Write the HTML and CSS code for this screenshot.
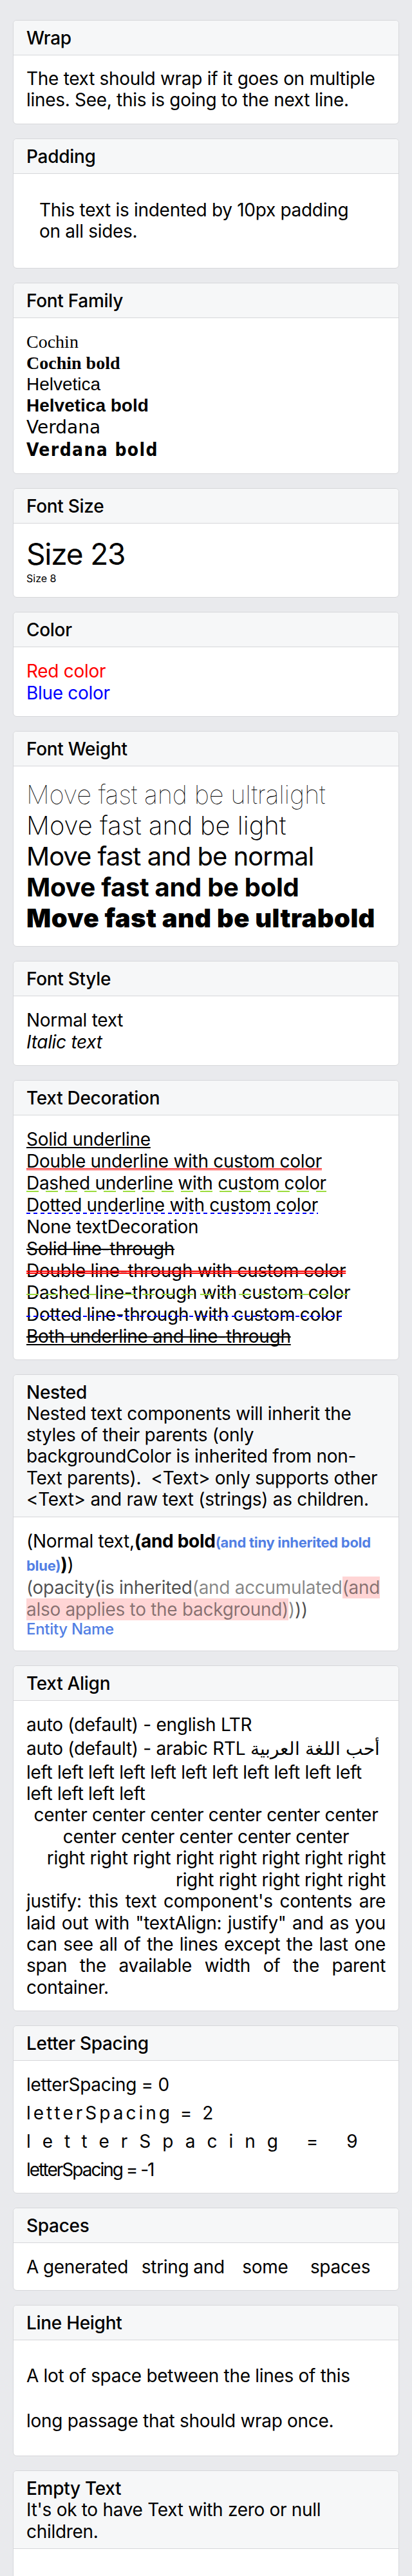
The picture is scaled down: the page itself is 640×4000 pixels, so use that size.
FILE: index.html
```html
<!DOCTYPE html>
<html lang="en">
<head>
    <meta charset="UTF-8">
    <meta name="viewport" content="width=device-width, initial-scale=1.0">
    <title>Text</title>
    <link rel="stylesheet" href="styles.css">
</head>
<body>
    <div class="page">
        <div class="block">
            <div class="block-head"><div class="block-title">Wrap</div></div>
            <div class="block-body">
                <p class="para">The text should wrap if it goes on multiple lines. See, this is going to the next line.</p>
            </div>
        </div>

        <div class="block">
            <div class="block-head"><div class="block-title">Padding</div></div>
            <div class="block-body">
                <p class="para padded">This text is indented by 10px padding on all sides.</p>
            </div>
        </div>

        <div class="block">
            <div class="block-head"><div class="block-title">Font Family</div></div>
            <div class="block-body">
                <div class="ff-cochin">Cochin</div>
                <div class="ff-cochin bold">Cochin bold</div>
                <div class="ff-helvetica">Helvetica</div>
                <div class="ff-helvetica bold">Helvetica bold</div>
                <div class="ff-verdana">Verdana</div>
                <div class="ff-verdana bold">Verdana bold</div>
            </div>
        </div>

        <div class="block">
            <div class="block-head"><div class="block-title">Font Size</div></div>
            <div class="block-body">
                <div class="size-23">Size 23</div>
                <div class="size-8">Size 8</div>
            </div>
        </div>

        <div class="block">
            <div class="block-head"><div class="block-title">Color</div></div>
            <div class="block-body">
                <div class="line red">Red color</div>
                <div class="line blue">Blue color</div>
            </div>
        </div>

        <div class="block">
            <div class="block-head"><div class="block-title">Font Weight</div></div>
            <div class="block-body">
                <div class="weight w100">Move fast and be ultralight</div>
                <div class="weight w200">Move fast and be light</div>
                <div class="weight w400">Move fast and be normal</div>
                <div class="weight w700">Move fast and be bold</div>
                <div class="weight w900">Move fast and be ultrabold</div>
            </div>
        </div>

        <div class="block">
            <div class="block-head"><div class="block-title">Font Style</div></div>
            <div class="block-body">
                <div class="line">Normal text</div>
                <div class="line italic">Italic text</div>
            </div>
        </div>

        <div class="block">
            <div class="block-head"><div class="block-title">Text Decoration</div></div>
            <div class="block-body">
                <div class="line"><span class="u-solid">Solid underline</span></div>
                <div class="line"><span class="u-double">Double underline with custom color</span></div>
                <div class="line"><span class="deco deco-under deco-dashed">Dashed underline with custom color</span></div>
                <div class="line"><span class="deco deco-under deco-dotted">Dotted underline with custom color</span></div>
                <div class="line">None textDecoration</div>
                <div class="line"><span class="t-solid">Solid line-through</span></div>
                <div class="line"><span class="t-double">Double line-through with custom color</span></div>
                <div class="line"><span class="deco deco-through deco-dashed">Dashed line-through with custom color</span></div>
                <div class="line"><span class="deco deco-through deco-dotted">Dotted line-through with custom color</span></div>
                <div class="line"><span class="ut-solid">Both underline and line-through</span></div>
            </div>
        </div>

        <div class="block">
            <div class="block-head">
                <div class="block-title">Nested</div>
                <div class="block-desc">Nested text components will inherit the styles of their parents (only backgroundColor is inherited from non-Text parents).&nbsp; &lt;Text&gt; only supports other &lt;Text&gt; and raw text (strings) as children.</div>
            </div>
            <div class="block-body">
                <p class="para nested">(Normal text,<b>(and bold</b><b class="tiny-blue">(and tiny inherited bold </b><b class="tiny-blue">blue)</b><b>)</b>)</p>
                <p class="para nested faded">(opacity(is inherited<span class="faded-more">(and accumulated</span><span class="faded-more pink">(and </span><span class="faded-more pink">also applies to the background)</span><span class="faded-more">)</span>))</p>
                <div class="entity-line"><span class="entity">Entity Name</span></div>
            </div>
        </div>

        <div class="block">
            <div class="block-head"><div class="block-title">Text Align</div></div>
            <div class="block-body">
                <div class="line">auto (default) - english LTR</div>
                <div class="line arabic">auto (default) - arabic RTL أحب اللغة العربية</div>
                <p class="para align-left">left left left left left left left left left left left left left left left</p>
                <p class="para align-center">center center center center center center center center center center center</p>
                <p class="para align-right">right right right right right right right right right right right right right</p>
                <p class="para align-justify">justify: this text component's contents are laid out with "textAlign: justify" and as you can see all of the lines except the last one span the available width of the parent container.</p>
            </div>
        </div>

        <div class="block">
            <div class="block-head"><div class="block-title">Letter Spacing</div></div>
            <div class="block-body">
                <div class="line">letterSpacing = 0</div>
                <div class="line spaced ls-2">letterSpacing = 2</div>
                <div class="line spaced ls-9">letterSpacing = 9</div>
                <div class="line spaced ls-neg">letterSpacing = -1</div>
            </div>
        </div>

        <div class="block">
            <div class="block-head"><div class="block-title">Spaces</div></div>
            <div class="block-body">
                <div class="line keep-spaces">A generated   string and    some     spaces</div>
            </div>
        </div>

        <div class="block">
            <div class="block-head"><div class="block-title">Line Height</div></div>
            <div class="block-body">
                <p class="para tall">A lot of space between the lines of this long passage that should wrap once.</p>
            </div>
        </div>

        <div class="block">
            <div class="block-head">
                <div class="block-title">Empty Text</div>
                <div class="block-desc">It's ok to have Text with zero or null children.</div>
            </div>
            <div class="block-body">
                <div class="line"></div>
            </div>
        </div>
    </div>
</body>
</html>
```

FILE: styles.css
```css
body {
    margin: 0;
    background-color: #e9eaed;
    font-family: Inter, "Noto Sans", sans-serif;
    font-size: 28px;
    color: #000;
}
.page {
    padding: 31px 20px 0;
    letter-spacing: -0.3px;
}
.block {
    margin-bottom: 22px;
    background-color: #fff;
    border: 1px solid #d6d7da;
    border-radius: 6px;
    overflow: hidden;
}
.block-head {
    padding: 10px 20px 9px;
    background-color: #f6f7f8;
    border-bottom: 1px solid #d6d7da;
}
.block-title {
    font-weight: 500;
    line-height: 34px;
}
.block-desc {
    line-height: 33.4px;
}
.block-body {
    padding: 20px 20px 19px;
}
.line {
    height: 34px;
    line-height: 34px;
    white-space: nowrap;
}
.para {
    margin: 0;
    line-height: 33.4px;
}
.padded {
    padding: 20px;
}

/* font family */
.ff-cochin {
    font-family: "Liberation Serif", serif;
    line-height: 33px;
    letter-spacing: 0;
}
.ff-helvetica {
    font-family: "Liberation Sans", Arial, sans-serif;
    line-height: 33px;
    letter-spacing: 0;
}
.ff-verdana {
    font-family: "DejaVu Sans", Verdana, sans-serif;
    line-height: 35px;
    letter-spacing: 0;
}
.ff-verdana.bold {
    font-family: "DejaVu Sans Condensed", "DejaVu Sans", sans-serif;
    letter-spacing: 1.4px;
}
.bold {
    font-weight: bold;
}

/* font size */
.size-23 {
    font-size: 46px;
    line-height: 55px;
    letter-spacing: -1.2px;
}
.size-8 {
    font-size: 16px;
    line-height: 20px;
    letter-spacing: 0;
}

.red {
    color: #ff0000;
}
.blue {
    color: #0000ff;
}

/* font weight */
.weight {
    font-size: 40px;
    line-height: 48px;
    white-space: nowrap;
}
.w100 { font-weight: 100; }
.w200 { font-weight: 200; letter-spacing: 0; }
.w400 { font-weight: 400; letter-spacing: -1px; }
.w700 { font-weight: 700; letter-spacing: -0.3px; }
.w900 { font-weight: 900; letter-spacing: 0.4px; }

.italic {
    font-style: italic;
}

/* text decoration */
.u-solid,
.u-double,
.t-solid,
.t-double,
.ut-solid {
    text-decoration-skip-ink: none;
}
.u-solid {
    text-decoration: underline solid #000 2px;
    text-underline-offset: 2px;
}
.u-double {
    text-decoration: underline double #ff0000 1px;
    text-underline-offset: 1px;
}
.t-solid {
    text-decoration: line-through solid #000 2px;
}
.t-double {
    text-decoration: line-through double #ff0000 2px;
}
.ut-solid {
    text-decoration: underline line-through solid #000 2px;
    text-underline-offset: 2px;
}
.deco {
    position: relative;
}
.deco::after {
    content: "";
    position: absolute;
    left: 0;
    right: 0;
    height: 2px;
}
.deco-under::after {
    top: 29px;
}
.deco-through::after {
    top: 19px;
}
.deco-dashed::after {
    background: repeating-linear-gradient(90deg, #9cdc40 0 19px, transparent 19px 30px);
}
.deco-dotted::after {
    background: repeating-linear-gradient(90deg, #0000ff 0 6px, transparent 6px 11px);
}

/* nested */
.nested {
    line-height: 34px;
}
.tiny-blue {
    font-size: 22px;
    color: #527fe4;
}
.faded {
    color: rgba(0, 0, 0, 0.7);
}
.faded-more {
    color: rgba(0, 0, 0, 0.49);
}
.pink {
    background-color: rgba(255, 170, 170, 0.49);
}
.entity-line {
    font-size: 24px;
    line-height: 28px;
}
.entity {
    font-weight: 500;
    color: #527fe4;
}

/* text align */
.arabic {
    height: 41px;
    line-height: 41px;
}
.align-left { text-align: left; }
.align-center { text-align: center; }
.align-right { text-align: right; }
.align-justify { text-align: justify; }

/* letter spacing */
.spaced {
    margin-top: 10px;
}
.ls-2 { letter-spacing: 4px; }
.ls-9 { letter-spacing: 18px; }
.ls-neg { letter-spacing: -2px; }

.keep-spaces {
    white-space: pre;
    word-spacing: -0.7px;
}
.tall {
    line-height: 70px;
}
```
